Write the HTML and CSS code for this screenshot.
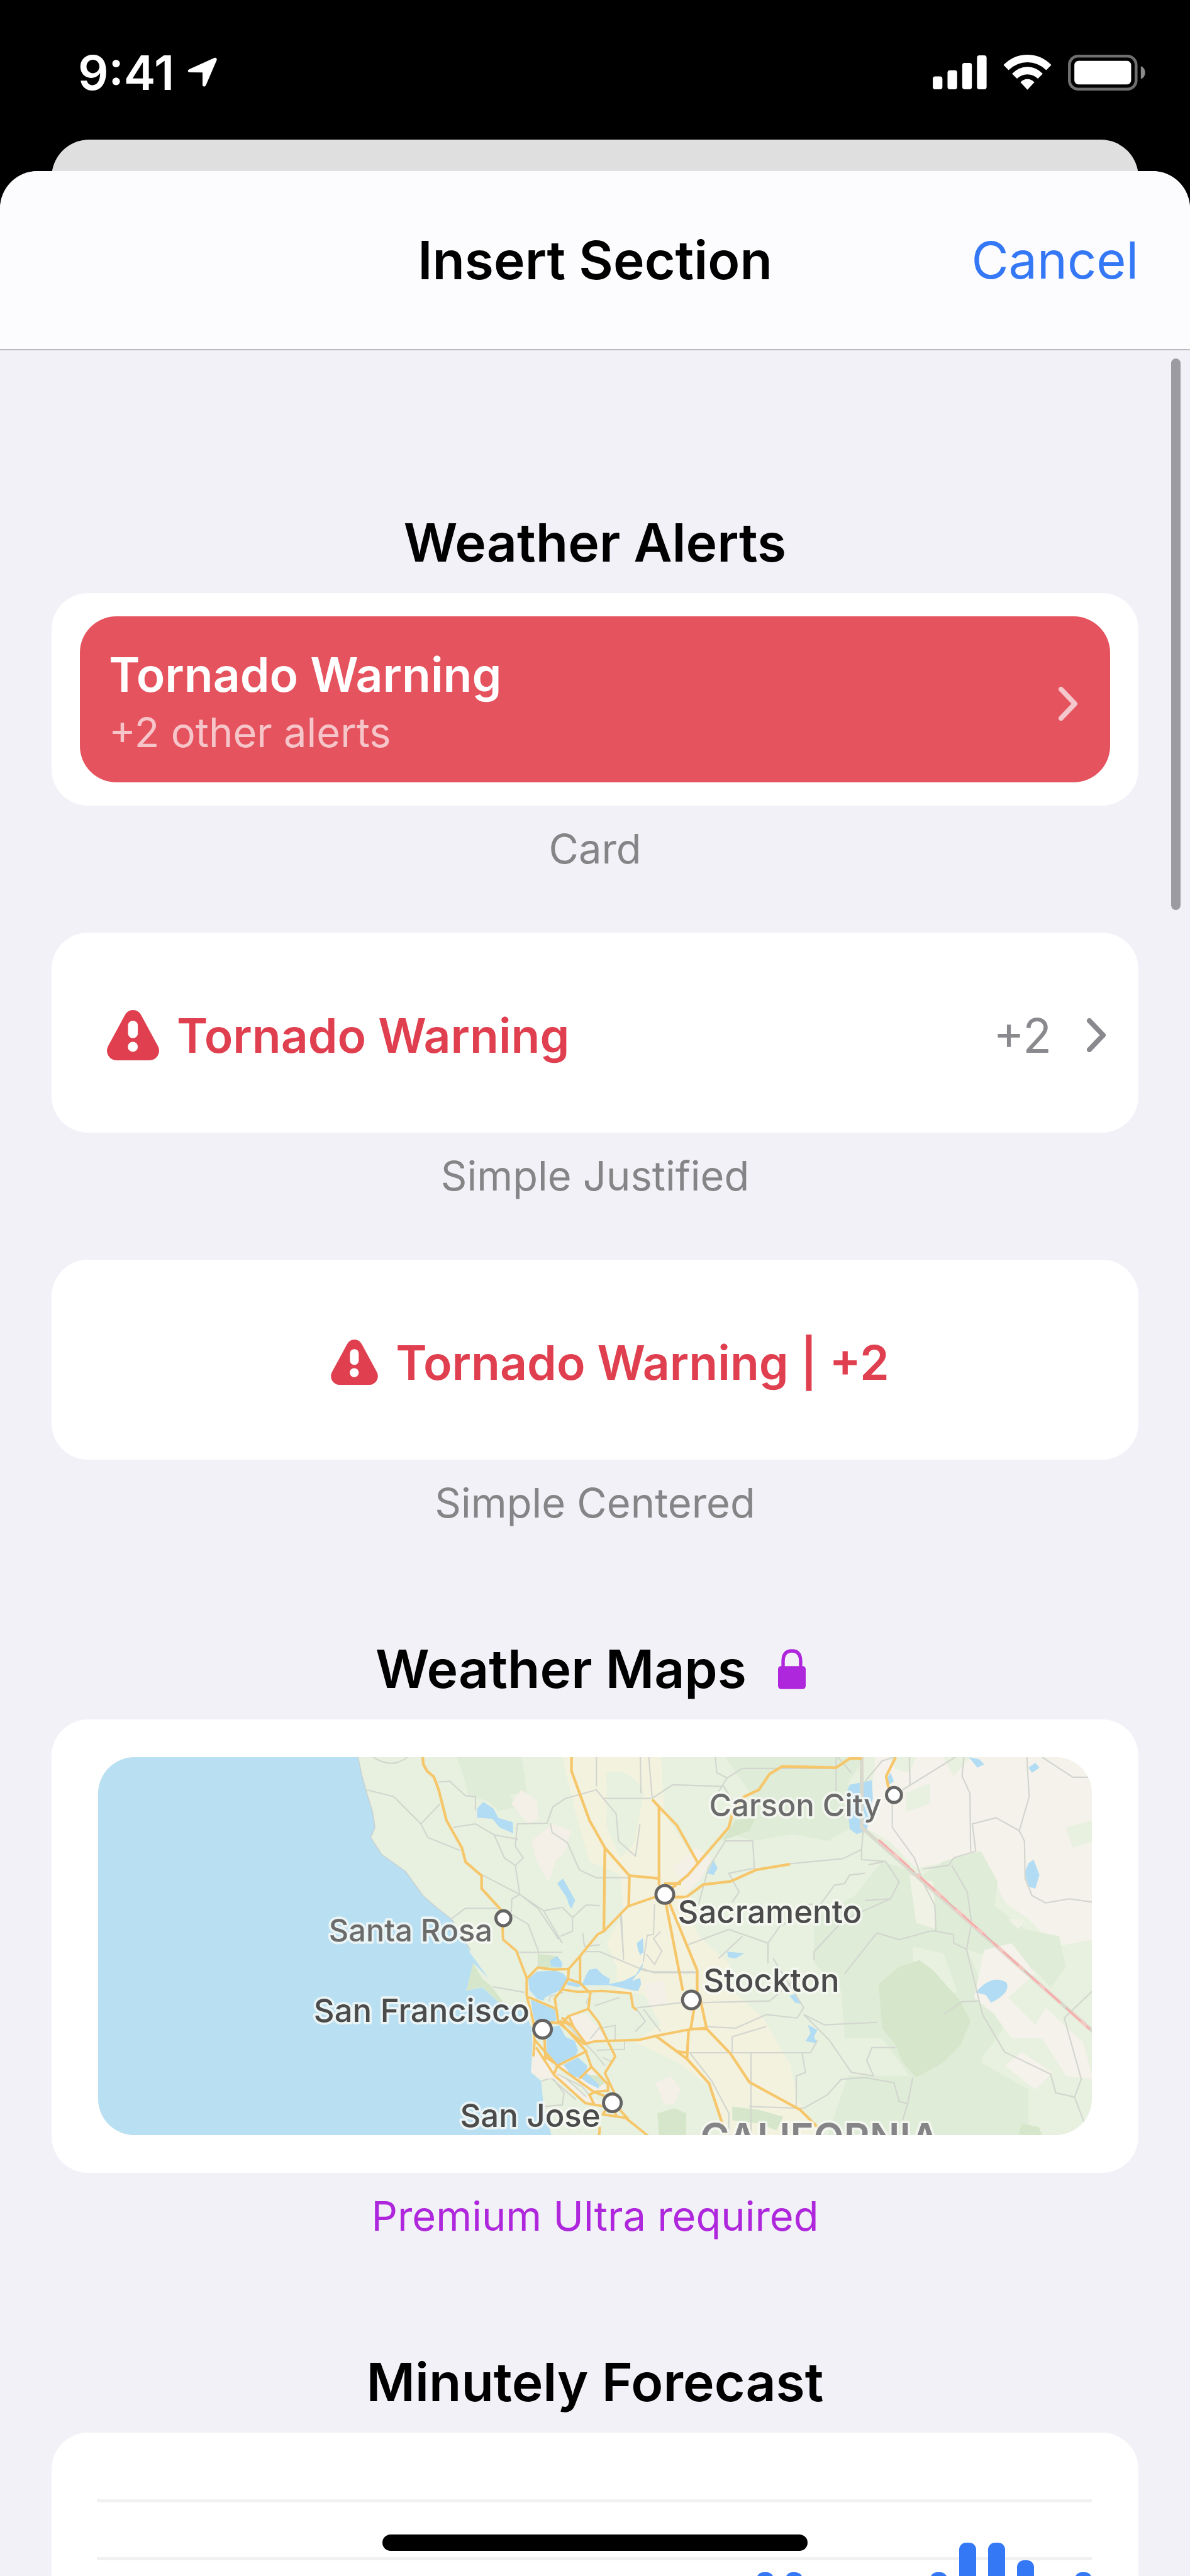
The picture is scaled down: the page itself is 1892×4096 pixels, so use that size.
FILE: index.html
```html
<!DOCTYPE html>
<html lang="en">
<head>
  <meta charset="UTF-8">
  <meta name="viewport" content="width=device-width, initial-scale=1">
  <title>Insert Section</title>
  <link rel="stylesheet" href="styles.css">
</head>
<body>

  <div class="status-bar">
    <div class="status-left">
      <span class="time">9:41</span>
      <svg class="location" viewBox="0 0 152 154">
        <path d="M10 62 L134 6 Q146 2 146 16 L92 142 Q84 152 76 142 L76 78 L10 77 Q-2 70 10 62Z" fill="#fff"/>
      </svg>
    </div>
    <div class="status-right">
      <svg class="signal" viewBox="0 0 264 166" fill="#fff">
        <rect x="0" y="103" width="47" height="63" rx="12"/>
        <rect x="72" y="73" width="47" height="93" rx="12"/>
        <rect x="144" y="37" width="47" height="129" rx="12"/>
        <rect x="216" y="0" width="47" height="166" rx="12"/>
      </svg>
      <svg class="wifi" viewBox="0 0 234 172" fill="#fff">
        <path d="M0 50 Q50 0 117 0 Q184 0 234 50 L209 75 Q168 37 117 37 Q66 37 25 75Z"/>
        <path d="M42 93 Q74 59 117 59 Q160 59 192 93 L168 117 Q146 96 117 96 Q88 96 66 117Z"/>
        <path d="M83 134 Q98 119 117 119 Q136 119 151 134 L117 171Z"/>
      </svg>
      <svg class="battery" viewBox="0 0 376 174">
        <rect x="7" y="7" width="324" height="160" rx="42" fill="none" stroke="#6f6f6f" stroke-width="14"/>
        <rect x="31" y="30" width="276" height="114" rx="20" fill="#fff"/>
        <path d="M354 56 Q375 64 375 87 Q375 110 354 118Z" fill="#8a8a8a"/>
      </svg>
    </div>
  </div>

  <div class="back-sheet"></div>

  <div class="sheet">
    <header class="sheet-header">
      <h1>Insert Section</h1>
      <button class="cancel" type="button">Cancel</button>
    </header>

    <main class="sections">
      <section>
        <h2>Weather Alerts</h2>

        <figure>
          <div class="card card-alert">
            <button class="alert" type="button">
              <span class="alert-text">
                <strong>Tornado Warning</strong>
                <span class="alert-more">+2 other alerts</span>
              </span>
              <svg class="chevron" viewBox="0 0 30 54"><path d="M4 4 L26 27 L4 50"/></svg>
            </button>
          </div>
          <figcaption>Card</figcaption>
        </figure>

        <figure>
          <button class="card card-row" type="button">
            <svg class="warning" viewBox="0 0 250 241">
              <path d="M85 26 Q98 0 125 0 Q152 0 165 26 L245 174 Q256 198 243 219 Q229 241 203 241 L47 241 Q21 241 7 219 Q-6 198 5 174Z" fill="#df3f4e"/>
              <rect x="101" y="51" width="47" height="84" rx="23" fill="#fff"/>
              <circle cx="124" cy="176" r="24" fill="#fff"/>
            </svg>
            <strong>Tornado Warning</strong>
            <span class="count">+2</span>
            <svg class="chevron" viewBox="0 0 30 54"><path d="M4 4 L26 27 L4 50"/></svg>
          </button>
          <figcaption>Simple Justified</figcaption>
        </figure>

        <figure>
          <button class="card card-center" type="button">
            <svg class="warning" viewBox="0 0 250 241">
              <path d="M85 26 Q98 0 125 0 Q152 0 165 26 L245 174 Q256 198 243 219 Q229 241 203 241 L47 241 Q21 241 7 219 Q-6 198 5 174Z" fill="#df3f4e"/>
              <rect x="101" y="51" width="47" height="84" rx="23" fill="#fff"/>
              <circle cx="124" cy="176" r="24" fill="#fff"/>
            </svg>
            <strong>Tornado Warning | +2</strong>
          </button>
          <figcaption>Simple Centered</figcaption>
        </figure>
      </section>

      <section>
        <h2>Weather Maps
          <svg class="lock" viewBox="0 0 82 118">
            <path d="M15 56 V36 Q15 5 41 5 Q67 5 67 36 V56" fill="none" stroke="#af27dc" stroke-width="10"/>
            <rect x="0" y="50" width="82" height="68" rx="9" fill="#af27dc"/>
          </svg>
        </h2>

        <figure>
          <div class="card card-map">
            <svg class="map" viewBox="34 394 2924 1110" preserveAspectRatio="xMidYMid slice">
              <rect x="34" y="394" width="2924" height="1110" fill="#e8f1df"/>

              <!-- terrain -->
              <path d="M1090 394 L1110 450 1125 510 1175 520 1215 552 1270 540 1245 505 1295 500 1290 450 1280 394Z" fill="#dfecd7"/>
              <path d="M1280 490 L1325 520 1330 575 1300 590 1250 530Z M1310 640 L1370 590 1425 610 1410 670 1380 700 1360 760 1325 700Z" fill="#f4f0e8"/>
              <path d="M1400 394 L1690 394 1700 560 1790 700 1760 830 1800 920 1890 1000 1900 1080 1990 1160 2070 1300 2090 1400 2160 1504 1890 1504 1830 1360 1740 1290 1610 1230 1690 1180 1640 1090 1560 1080 1560 1010 1530 940 1580 850 1570 740 1480 700 1440 560Z" fill="#f3f2df"/>
              <path d="M1530 440 Q1600 420 1640 500 L1610 650 1570 690 1530 600Z" fill="#e8f1df"/>
              <g transform="translate(1459)">
                <path d="M420 394 L830 394 780 470 790 600 720 640 620 620 500 640 440 620 400 640 440 570 500 510Z" fill="#dfecd7"/>
                <path d="M860 394 L1500 394 1500 930 1390 950 1310 870 1240 820 1170 670 1080 700 980 720 900 640 830 600 850 500Z" fill="#f4f2ea"/>
                <path d="M950 500 L1020 470 1020 530 950 555Z M900 394 L980 394 960 440 920 430Z M1060 394 L1140 394 1090 450Z M1420 600 L1500 580 1500 640 1440 660Z" fill="#e8f1df"/>
                <path d="M680 870 L800 800 880 700 1000 740 1060 700 1170 670 1220 760 1210 830 1300 900 1400 920 1420 1010 1370 1080 1260 1100 1230 1200 1170 1280 1260 1330 1310 1370 1310 1504 720 1504 780 1330 960 1330 880 1220 770 1220 760 1080 680 1000Z" fill="#dfecd7"/>
                <path d="M1130 960 L1330 1020 1480 1190 1500 1504 1390 1440 1310 1370 1170 1290 1260 1200 1190 1100Z" fill="#e8f1df"/>
                <path d="M1180 960 L1260 940 1330 1030 1250 1100 1330 1180 1360 1130 1470 1230 1500 1340 1420 1330 1350 1220 1260 1220 1210 1150 1150 1100Z M1240 1300 L1290 1260 1380 1320 1330 1370Z" fill="#f4f2ea"/>
                <path d="M960 740 L1030 760 1040 900 980 880Z M1250 870 L1300 870 1280 900Z" fill="#f0f2e5"/>
                <path d="M970 950 L1060 970 1100 1080 1060 1110 970 1000Z" fill="#e8f1df"/>
                <path d="M870 1060 L930 1010 990 990 1030 1020 1110 1110 1140 1170 1110 1240 1060 1290 980 1335 940 1290 920 1240 880 1190Z M1290 1470 L1340 1480 1350 1504 1280 1504Z M220 1440 L270 1425 305 1440 305 1504 225 1504Z M440 1420 L520 1430 590 1450 570 1490 520 1470 440 1460Z" fill="#d5e6cb"/>
                <path d="M410 640 L450 580 510 570 490 610Z" fill="#d5e6cb"/>
                <path d="M270 720 L330 660 380 690 350 750 310 790Z M180 1060 L240 1050 250 1120 200 1130Z M215 1350 L260 1330 290 1370 270 1410 240 1415Z" fill="#f4f0e8"/>
              </g>

              <!-- ocean -->
              <path d="M34 394 L800 394 812 450 826 500 843 555 850 600 837 630 870 680 940 730 990 800 1030 835 1075 870 1120 940 1130 970 1185 1045 1140 1000 1130 1050 1117 1080 1165 1070 1215 1115 1290 1140 1310 1190 1312 1240 1308 1320 1338 1345 1345 1420 1368 1504 34 1504Z" fill="#b8dff2"/>
              <path d="M1138 998 L1118 1080 1165 1068 1215 1115 1226 1112 1190 1065 1165 1045Z" fill="#d5e6cb"/>
              <path d="M800 394 L812 450 826 500 843 555 850 600 837 630 870 680 940 730 990 800 1030 835 1075 870 1130 960" fill="none" stroke="#c9d2d3" stroke-width="3"/>

              <!-- lakes -->
              <g fill="#b2dcf3">
                <path d="M1150 545 L1168 525 1198 545 1212 572 1255 585 1256 618 1215 600 1195 575 1150 572Z"/>
                <path d="M1385 765 L1402 750 1438 815 1425 838 1412 805Z"/>
                <g transform="translate(1459)">
                  <path d="M785 475 L850 462 853 515 835 610 805 620 785 605 775 500Z"/>
                  <path d="M895 455 L905 440 915 465 900 475Z M1135 394 L1165 400 1180 415 1160 425Z M1310 425 L1330 410 1342 425 1320 440Z"/>
                  <path d="M1310 705 L1325 695 1342 740 1330 780 1312 775 1298 735Z"/>
                  <path d="M1155 1085 Q1200 1030 1245 1055 Q1260 1085 1200 1115 L1185 1092Z"/>
                  <path d="M367 735 L385 697 397 720 385 740Z M425 965 L475 970 450 985 428 982Z M160 940 L178 925 180 970 165 965Z"/>
                  <path d="M608 1095 L625 1090 643 1118 625 1115Z M662 1180 L690 1195 680 1215 690 1235 655 1228 670 1205Z"/>
                </g>
              </g>

              <!-- county lines and small roads -->
              <g fill="none" stroke="#d2d6cf" stroke-width="4" stroke-linejoin="round">
                <path d="M826 490 L905 510 985 590 1005 630 1100 668 M985 590 L1040 532 M1035 467 L1070 465 1115 507 1145 510 1145 550 M1080 600 L1145 590 1200 622 1270 635 M1200 622 L1230 690 1262 712 1285 690 1262 655 1268 590 1355 588 1372 540 1410 515 1500 490 1520 515 1660 515 M1262 712 L1275 797 1165 740 M1275 797 L1345 845 1400 940 M1365 588 L1370 615 1415 645 1450 725 1500 748 1600 748 M1075 868 L1115 838 1210 838 M1250 850 L1252 810 1275 797 1330 840 1390 930 M1345 845 L1400 835 1430 865 1470 828 1510 830 M1430 865 L1430 905 1395 920 M1270 967 L1400 967 M1330 967 L1330 1010 M1250 855 L1300 885 1330 965 M1500 394 L1500 480 M1195 1068 L1290 1085 M1340 1345 L1370 1335 1405 1380 1400 1415 1345 1420 M1365 1335 L1440 1400 M845 394 Q900 430 945 394"/>
                <path d="M1460 910 L1465 950 1510 945 M1460 965 L1510 965 1640 1020 1670 1025 1800 1025 M1520 515 L1558 560 1565 640 1615 685 1628 590 M1570 850 L1580 980"/>
                <g transform="translate(1459)">
                  <path d="M170 394 L172 500 M195 394 L205 515 265 475 415 480 440 520 M390 394 L395 440 425 455 470 427 745 427 M425 455 L400 495 M745 394 L745 510 M750 394 L790 440 M830 465 L880 405 915 394 M960 394 L962 475 M940 490 L1095 394 M1120 394 L1115 450 1138 500 1140 670 M1305 394 L1312 510 1283 610 1215 572 1145 590 1155 670 1090 690 1075 712 1000 722 M1350 394 L1440 453 1490 453"/>
                  <path d="M1283 610 L1298 640 1300 750 1320 800 1360 822 1430 810 1500 820 M910 505 L910 600 975 690 1000 760 1035 830 1038 905 1090 915 1090 940 1128 958 1175 1150 1240 1260 1375 1325 1390 1380 1445 1392 1475 1470 M1445 1392 L1465 1340 1415 1160 1500 1078 M1085 712 L1130 790 1143 880 1128 958"/>
                  <path d="M610 707 L765 692 820 665 825 600 M820 665 L820 695 890 700 930 760 905 810 830 815 M890 700 L840 710 M830 735 L785 740 770 765 740 770 700 825 650 827 M905 810 L770 870 680 965 680 990 M770 1030 L865 910 930 930 1020 905 1038 905"/>
                  <path d="M340 830 L370 720 420 640 500 640 505 720 430 735 460 790 440 820 M310 945 L430 900 545 940 545 1000 M545 940 L580 890 670 850 M400 985 L470 920 M345 1115 L550 1110 620 1050 M210 1025 L330 1025 M560 985 L650 1130 630 1160 540 1150 450 1190 360 1185 M650 1150 L710 1180 865 1173 M650 1150 L725 1225 790 1320 855 1330 835 1285 850 1247 920 1247 M690 1225 L670 1262 315 1262 M440 1262 L440 1215 540 1185 M495 1262 L495 1504 M490 1420 L650 1425 720 1385 760 1340 830 1335 915 1350 930 1405 955 1412 M970 1335 L955 1412 940 1460 M645 1262 L655 1320 628 1330 628 1425 M315 1262 L380 1345 430 1440 430 1504 M160 1135 L185 1170 155 1200 M180 1135 L230 1200 M160 1130 L290 1115 M1060 1150 L1115 1112 1165 1110"/>
                </g>
              </g>

              <!-- state border -->
              <g transform="translate(1459)" fill="none">
                <path d="M820 394 V600 L1500 1200" stroke="#d9d8cd" stroke-width="11"/>
                <path d="M870 637 L1490 1193" stroke="#f5c8c2" stroke-width="9" stroke-dasharray="120 30"/>
                <path d="M870 637 L1490 1193" stroke="#f0a2a0" stroke-width="3" stroke-dasharray="60 22"/>
              </g>

              <!-- bay area, drawn at its own larger scale -->
              <g transform="translate(1203 802) scale(.6077)">
                <path d="M340 580 L440 570 500 640 530 690 440 710Z M180 690 L290 700 240 620Z M190 720 L300 850 440 960 520 1000 470 1010 390 960 280 880 220 885 172 850Z M300 820 L460 950 540 930 460 830Z" fill="#f4f0e8"/>
                <path d="M205 280 L300 290 320 350 210 345Z M440 860 L510 870 530 900 500 925 450 890Z" fill="#d5e6cb"/>
                <path d="M160 400 L200 365 290 360 330 375 350 400 325 450 290 465 240 490 235 505 205 498 165 455Z M172 500 L290 550 295 600 230 630 190 600 180 560Z M245 640 L310 625 340 680 385 700 400 745 390 770 300 815 250 780Z M330 815 L400 780 445 820 440 845 405 878 370 870Z M415 880 L440 855 500 910 500 930 450 905Z M265 310 L300 290 325 325 320 345 270 340Z M340 410 L420 425 440 380 455 355 490 350 520 380 555 400 550 425 620 410 680 380 715 320 710 350 660 410 700 395 705 425 690 460 640 450 550 430 420 430 400 440 350 430Z M685 240 L712 205 715 270 700 285Z M345 0 L385 15 370 60 355 40Z" fill="#b2dcf3"/>
                <g fill="none" stroke="#d2d6cf" stroke-width="6">
                  <path d="M320 590 L480 760 530 820 M260 510 L265 485 330 465 M440 520 L450 490 M460 690 L500 640 580 625 580 700 M490 745 L625 740 625 700 M300 860 L420 920 470 980 M340 880 L440 970 M520 780 L560 800 M610 90 L620 310 M730 280 L770 330 805 265 765 205 800 170 M715 320 L735 190 765 185 770 40 M700 345 L765 370 970 370 M600 490 L480 530"/>
                </g>
                <g fill="none" stroke="#f6c66b" stroke-width="12" stroke-linejoin="round" stroke-linecap="round">
                  <path d="M35 140 L38 210 102 265 152 395 152 480 185 610 190 700 185 770 M152 400 L205 345 280 355 355 352 410 290 495 185 525 170 640 50 770 5 M355 352 L352 400 320 455 288 495 305 610 M410 290 V420 L460 470 M352 400 L410 420 M328 452 L400 463 515 458 655 470 665 535 680 548 M165 490 L295 545 M460 465 L450 545 355 580 320 615 270 610 M450 545 L500 610 580 775 530 855 575 950"/>
                  <path d="M305 610 L430 715 480 702 695 695 780 675 935 645 1015 637 M325 590 L380 635 440 715 M355 580 L380 635 M320 615 L435 745 465 825 M315 605 L375 625 M440 750 L300 820 285 860 M465 825 L410 880 M465 825 L545 910 545 940 485 945 455 960 480 1010 M195 700 L300 820 475 945 525 965 M238 690 L243 785 M200 735 L285 865 435 1000 520 1015 M240 775 L285 805"/>
                  <path d="M530 1040 L520 1055 630 1072 740 1160 M600 1030 L640 1075 M575 1040 L585 1060 M505 1120 L502 1160"/>
                </g>
              </g>

              <!-- highways -->
              <g fill="none" stroke="#f6c66b" stroke-width="8" stroke-linejoin="round">
                <path d="M990 394 L992 415 1003 435 1023 452 1037 490 1060 580 1105 660 1116 702 1163 742 1163 780 1227 850 1227 890"/>
                <path d="M1427 394 L1427 435 1480 580 1525 660 1597 742 1683 750 M1525 660 L1522 905 M1597 742 L1595 830"/>
                <g transform="translate(1459)">
                  <path d="M205 518 L225 540 225 770 M225 540 L278 595 338 703 M240 797 L310 740 430 600 440 560 475 510 518 490 550 443 587 421 745 425 785 398 820 398 M920 394 L892 450 898 480 915 505"/>
                  <path d="M240 765 L290 765 M240 805 L305 805 355 768 435 759 510 725 610 708 M240 797 L295 1080 M245 797 L337 1020 337 1100 M345 1100 L365 1192 435 1265 490 1348 640 1430 700 1490 M330 1120 L318 1192 M365 1192 L318 1192 M312 1192 L307 1280 215 1212 M307 1280 L372 1352 422 1504 M275 1258 L307 1262"/>
                </g>
              </g>

              <!-- cities -->
              <g fill="#fff" stroke="#646464" stroke-width="9">
                <circle cx="1227" cy="867" r="22"/>
                <circle cx="1342" cy="1193" r="26"/>
                <circle cx="1547" cy="1409" r="26"/>
                <circle cx="1701" cy="797" r="26"/>
                <circle cx="1779" cy="1107" r="26"/>
                <circle cx="2374" cy="505" r="22"/>
              </g>
              <g class="city">
                <text class="minor" x="1195" y="935" text-anchor="end">Santa Rosa</text>
                <text x="1304" y="1172" text-anchor="end">San Francisco</text>
                <text x="1512" y="1480" text-anchor="end">San Jose</text>
                <text x="1739" y="881">Sacramento</text>
                <text x="1814" y="1083">Stockton</text>
                <text class="minor" x="2337" y="568" text-anchor="end">Carson City</text>
                <text class="state" x="1805" y="1554">CALIFORNIA</text>
              </g>
            </svg>
          </div>
          <figcaption class="premium">Premium Ultra required</figcaption>
        </figure>
      </section>

      <section>
        <h2>Minutely Forecast</h2>

        <figure>
          <div class="card card-chart">
            <div class="chart">
              <span class="bar" style="height: 40px"></span>
              <span class="bar" style="height: 60px"></span>
              <span class="bar" style="height: 80px"></span>
              <span class="bar" style="height: 80px"></span>
              <span class="bar" style="height: 110px"></span>
              <span class="bar" style="height: 130px"></span>
              <span class="bar" style="height: 120px"></span>
              <span class="bar" style="height: 150px"></span>
              <span class="bar" style="height: 170px"></span>
              <span class="bar" style="height: 190px"></span>
              <span class="bar" style="height: 210px"></span>
              <span class="bar" style="height: 230px"></span>
              <span class="bar" style="height: 257px"></span>
              <span class="bar" style="height: 257px"></span>
              <span class="bar" style="height: 230px"></span>
              <span class="bar" style="height: 210px"></span>
              <span class="bar" style="height: 210px"></span>
              <span class="bar" style="height: 230px"></span>
              <span class="bar" style="height: 257px"></span>
              <span class="bar" style="height: 304px"></span>
              <span class="bar" style="height: 304px"></span>
              <span class="bar" style="height: 276px"></span>
              <span class="bar" style="height: 230px"></span>
              <span class="bar" style="height: 257px"></span>
            </div>
          </div>
        </figure>
      </section>

      <div class="scroll-thumb"></div>
    </main>
  </div>

  <div class="home-indicator"></div>

</body>
</html>
```

FILE: styles.css
```css
* {
  box-sizing: border-box;
}

body {
  margin: 0;
  height: 100vh;
  display: flex;
  flex-direction: column;
  position: relative;
  overflow: hidden;
  background: #000;
  color: #000;
  font-family: Inter, "Liberation Sans", sans-serif;
}

button {
  font: inherit;
  border: none;
  cursor: pointer;
}

strong {
  font-weight: 600;
}

/* status bar */
.status-bar {
  height: 222px;
  padding: 8px 71px 0 124px;
  display: flex;
  align-items: center;
  justify-content: space-between;
  color: #fff;
}

.status-left,
.status-right {
  display: flex;
  align-items: center;
}

.status-left {
  gap: 20px;
}

.status-right {
  gap: 26px;
}

.time {
  font-size: 76px;
  font-weight: 600;
}

.location {
  width: 50px;
  height: 50px;
}

.signal {
  width: 86px;
  height: 54px;
}

.wifi {
  width: 77px;
  height: 56px;
}

.battery {
  width: 123px;
  height: 57px;
}

/* sheets */
.back-sheet {
  height: 110px;
  margin: 0 82px -60px;
  border-radius: 60px 60px 0 0;
  background: #dfdfdf;
}

.sheet {
  flex: 1;
  min-height: 0;
  display: flex;
  flex-direction: column;
  border-radius: 60px 60px 0 0;
  background: #f2f1f7;
  overflow: hidden;
}

.sheet-header {
  height: 285px;
  padding: 0 82px;
  display: grid;
  grid-template-columns: 1fr auto 1fr;
  align-items: center;
  background: #fcfcfe;
  border-bottom: 2px solid #bcbcc0;
}

.sheet-header h1 {
  grid-column: 2;
  margin: 0;
  font-size: 84px;
  font-weight: 600;
}

.cancel {
  justify-self: end;
  padding: 0;
  background: none;
  color: #3478f6;
  font-size: 81px;
}

/* content */
.sections {
  flex: 1;
  min-height: 0;
  position: relative;
  padding: 175px 82px 0;
  overflow: hidden;
}

h2 {
  margin: 0 0 30px;
  padding-top: 81px;
  display: flex;
  align-items: center;
  justify-content: center;
  gap: 50px;
  font-size: 84px;
  line-height: 100px;
  font-weight: 600;
}

.lock {
  width: 44px;
  height: 64px;
  margin-right: 14px;
}

figure {
  margin: 0 0 93px;
}

figcaption {
  margin-top: 29px;
  color: #858587;
  font-size: 65px;
  line-height: 80px;
  text-align: center;
}

figcaption.premium {
  color: #af27dc;
}

.card {
  width: 100%;
  display: flex;
  align-items: center;
  border-radius: 58px;
  background: #fff;
}

.card-alert {
  padding: 37px 45px;
}

.alert {
  width: 100%;
  min-height: 264px;
  padding: 14px 52px 0 46px;
  display: flex;
  align-items: center;
  justify-content: space-between;
  border-radius: 58px;
  background: #e5535e;
  color: #fff;
  font-size: 75px;
  text-align: left;
}

.alert-text {
  display: flex;
  flex-direction: column;
  line-height: 92px;
}

.alert-more {
  color: #f6c5ca;
  font-size: 65px;
}

.chevron {
  width: 30px;
  height: 54px;
}

.chevron path {
  fill: none;
  stroke: #8a8a8e;
  stroke-width: 8;
  stroke-linecap: round;
  stroke-linejoin: round;
}

.alert .chevron path {
  stroke: #f3c7cc;
}

.card-row,
.card-center {
  min-height: 318px;
  padding: 8px 52px 0 88px;
  gap: 28px;
  color: #df3f4e;
  font-size: 75px;
}

.card-center {
  padding: 8px 52px 0 100px;
  justify-content: center;
}

.warning {
  width: 83px;
  height: 80px;
}

.card-center .warning {
  width: 75px;
  height: 72px;
}

.count {
  margin: 0 28px 0 auto;
  color: #8a8a8e;
}

.card-map {
  padding: 60px 74px;
}

.map {
  width: 100%;
  height: 601px;
  border-radius: 58px;
}

.city text {
  font-size: 94px;
  font-weight: 500;
  fill: #4b4b4b;
  stroke: #f7f9f5;
  stroke-opacity: 0.8;
  stroke-width: 14px;
  stroke-linejoin: round;
  paint-order: stroke;
}

.city .minor {
  font-size: 90px;
  fill: #6b6b6b;
}

.city .state {
  font-size: 116px;
  font-weight: 600;
  fill: #858587;
}

/* minutely chart */
.card-chart {
  padding: 106px 74px 106px 72px;
}

.chart {
  width: 100%;
  height: 373px;
  display: flex;
  align-items: flex-end;
  justify-content: flex-end;
  gap: 19px;
  background: repeating-linear-gradient(#f1f1f1 0 5px, #fff 5px 92px);
}

.bar {
  width: 27px;
  border-radius: 11px;
  background: #3478f6;
}

/* overlays */
.scroll-thumb {
  position: absolute;
  top: 13px;
  right: 15px;
  width: 15px;
  height: 877px;
  border-radius: 8px;
  background: #9c9ca0;
}

.home-indicator {
  position: absolute;
  bottom: 40px;
  left: 50%;
  width: 676px;
  height: 26px;
  margin-left: -338px;
  border-radius: 13px;
  background: #000;
}
```
